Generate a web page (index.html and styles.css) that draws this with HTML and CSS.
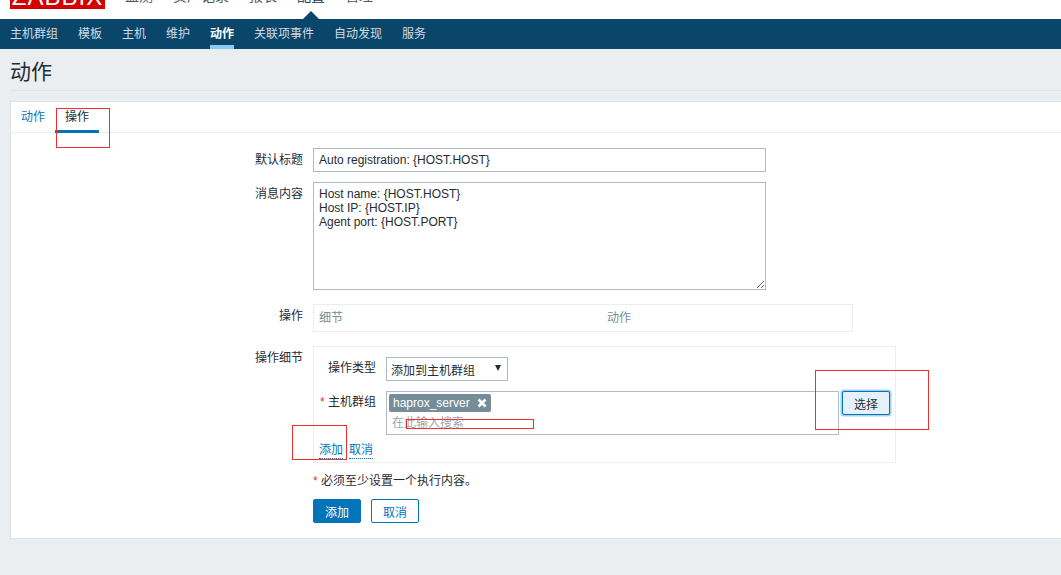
FILE: index.html
```html
<!DOCTYPE html>
<html lang="zh">
<head>
<meta charset="utf-8">
<title>动作</title>
<link rel="stylesheet" href="styles.css">
</head>
<body>
<header class="top">
  <div class="logo"><span class="logo-text">ZABBIX</span></div>
  <nav class="top-menu">
    <a class="top-item">监测</a>
    <a class="top-item">资产记录</a>
    <a class="top-item">报表</a>
    <a class="top-item top-active">配置</a>
    <a class="top-item">管理</a>
  </nav>
</header>
<nav class="sub">
  <a class="sub-item">主机群组</a>
  <a class="sub-item">模板</a>
  <a class="sub-item">主机</a>
  <a class="sub-item">维护</a>
  <a class="sub-item sub-active">动作</a>
  <a class="sub-item">关联项事件</a>
  <a class="sub-item">自动发现</a>
  <a class="sub-item">服务</a>
</nav>
<main class="page">
  <h1 class="title">动作</h1>
  <section class="card">
    <div class="tabs">
      <a class="tab">动作</a>
      <a class="tab tab-active">操作</a>
    </div>
    <div class="form">
      <div class="row row-subject">
        <label class="lbl">默认标题</label>
        <input class="input subject" value="Auto registration: {HOST.HOST}">
      </div>
      <div class="row row-message">
        <label class="lbl">消息内容</label>
        <textarea class="input message">Host name: {HOST.HOST}
Host IP: {HOST.IP}
Agent port: {HOST.PORT}</textarea>
      </div>
      <div class="row row-ops">
        <label class="lbl">操作</label>
        <div class="ops-box"><span class="ops-col">细节</span><span class="ops-col">动作</span></div>
      </div>
      <div class="row row-detail">
        <label class="lbl">操作细节</label>
        <div class="detail">
          <div class="d-row d-type">
            <label class="d-lbl">操作类型</label>
            <div class="select"><span>添加到主机群组</span><span class="caret"></span></div>
          </div>
          <div class="d-row d-group">
            <label class="d-lbl"><span class="req">*</span> 主机群组</label>
            <div class="multi">
              <div class="chip"><span>haprox_server</span><svg class="chip-x" viewBox="0 0 10 10" width="10" height="10"><path d="M1.5 1.5l7 7M8.5 1.5l-7 7" stroke="#fff" stroke-width="2.6" fill="none"/></svg></div>
              <div class="placeholder">在此输入搜索</div>
            </div>
            <button class="pick">选择</button>
          </div>
          <div class="d-links"><a class="dash">添加</a><a class="dash">取消</a></div>
        </div>
      </div>
      <p class="note"><span class="req">*</span> 必须至少设置一个执行内容。</p>
      <div class="actions">
        <button class="btn-primary">添加</button>
        <button class="btn-outline">取消</button>
      </div>
    </div>
    <i class="mark mark-tab"></i>
    <i class="mark mark-pick"></i>
    <i class="mark mark-add"></i>
    <i class="mark mark-search"></i>
  </section>
</main>
</body>
</html>
```
FILE: styles.css
```css
* { box-sizing: border-box; }
html, body { margin: 0; padding: 0; height: 575px; overflow: hidden; }
body { background: #ebeef0; font-family: "Liberation Sans", "Noto Sans CJK SC", sans-serif; font-size: 12px; color: #1f2c33; }
.top { height: 19px; background: #fff; display: flex; align-items: flex-end; padding-left: 10px; overflow: hidden; }
.logo { width: 95px; height: 30px; margin-bottom: 10px; padding-top: 4px; background: #d40000; flex: none; display: flex; align-items: center; justify-content: center; }
.logo-text { color: #fff; font-size: 24px; line-height: 25px; letter-spacing: 1px; }
.top-menu { display: flex; margin-left: 20px; gap: 20px; height: 30px; margin-bottom: 10px; }
.top-item { font-size: 14px; line-height: 34px; color: #555; white-space: nowrap; }
.top-active { position: relative; color: #2b3238; }
.top-active::after { content: ""; position: absolute; left: 50%; bottom: -10px; margin-left: -8px; border: 8px solid transparent; border-top: 0; border-bottom-color: #0a466a; }
.sub { height: 30px; background: #0a466a; display: flex; padding-left: 10px; gap: 20px; }
.sub-item { color: #d0dde5; font-size: 12px; line-height: 30px; height: 30px; }
.sub-active { color: #fff; font-weight: bold; border-bottom: 4px solid #8bc9f2; width: 24px; }
.page { padding: 0 0 0 10px; }
.title { margin: 0; height: 42px; border-bottom: 1px solid #dfe4e7; font-size: 21px; font-weight: normal; line-height: 45px; color: #1f2c33; }
.card { margin-top: 10px; height: 438px; margin-right: -2px; background: #fff; border: 1px solid #dfe4e7; position: relative; }
.tabs { height: 31px; display: flex; border-bottom: 1px solid #ebeef0; }
.tab { padding: 0 10px; line-height: 30px; color: #0275b8; font-size: 12px; height: 31px; }
.tab-active { color: #1f2c33; border-bottom: 3px solid #0275b8; }
.form { padding-top: 15px; }
.row { display: flex; }
.lbl { width: 302px; flex: none; text-align: right; padding: 2px 10px 0 0; line-height: 20px; font-size: 12px; color: #1f2c33; }
.input { border: 1px solid #acbbc4; background: #fff; font: 12px "Liberation Sans", "Noto Sans CJK SC", sans-serif; color: #1f2c33; margin: 0; padding: 0 5px; outline: none; display: block; }
.subject { width: 453px; height: 24px; }
.row-message { margin-top: 10px; }
.message { width: 453px; height: 108px; padding: 4px 5px; line-height: 14px; resize: both; }
.row-ops { margin-top: 14px; }
.ops-box { width: 540px; height: 28px; border: 1px solid #ebeef0; display: flex; padding-left: 5px; line-height: 26px; color: #768d99; }
.ops-col { width: 288px; flex: none; }
.row-detail { margin-top: 14px; }
.detail { width: 583px; height: 117px; border: 1px solid #ebeef0; padding-top: 10px; }
.d-row { display: flex; }
.d-lbl { width: 62px; flex: none; text-align: right; line-height: 23px; font-size: 12px; }
.req { color: #dc3545; }
.select { margin-left: 10px; width: 122px; height: 24px; border: 1px solid #acbbc4; display: flex; justify-content: space-between; align-items: center; padding: 0 5px 0 4px; }
.caret { width: 0; height: 0; border: 3.5px solid transparent; border-top: 6px solid #1f2c33; border-bottom: 0; margin-top: -2px; margin-right: 1px; }
.d-group { margin-top: 10px; align-items: flex-start; }
.multi { margin-left: 10px; width: 453px; height: 44px; border: 1px solid #acbbc4; padding: 2px; }
.chip { display: inline-flex; align-items: center; gap: 7px; height: 18px; padding: 0 4px; background: #768d99; color: #fff; border-radius: 2px; font-size: 12px; width: 102px; white-space: nowrap; }
.chip-x { flex: none; }
.placeholder { color: #9aa7b0; margin-top: 3px; margin-left: 3px; line-height: 16px; }
.pick { margin-left: 3px; width: 48px; height: 24px; flex: none; background: #e6f2fb; border: 1px solid #0275b8; border-radius: 2px; box-shadow: 0 0 0 1.5px #a3d0f3; color: #1f2c33; font: 12px "Liberation Sans", "Noto Sans CJK SC", sans-serif; padding: 0; }
.d-links { display: flex; gap: 6px; padding-left: 5px; margin-top: 8px; }
.dash { color: #0275b8; border-bottom: 1px dotted #0275b8; line-height: 14px; height: 16px; }
.note { margin: 10px 0 0 302px; line-height: 16px; }
.actions { display: flex; gap: 10px; margin: 10px 0 0 302px; }
.btn-primary, .btn-outline { width: 48px; height: 24px; border-radius: 2px; font: 12px "Liberation Sans", "Noto Sans CJK SC", sans-serif; padding: 0; }
.btn-primary { background: #0275b8; border: 1px solid #0275b8; color: #fff; }
.btn-outline { background: #fff; border: 1px solid #0275b8; color: #0275b8; }
.mark { position: absolute; border: 1px solid #f03030; pointer-events: none; }
.mark-tab { left: 45px; top: 6px; width: 54px; height: 40px; }
.mark-pick { left: 804px; top: 268px; width: 114px; height: 60px; }
.mark-add { left: 281px; top: 323px; width: 55px; height: 35px; }
.mark-search { left: 395px; top: 317px; width: 128px; height: 10px; }
```
